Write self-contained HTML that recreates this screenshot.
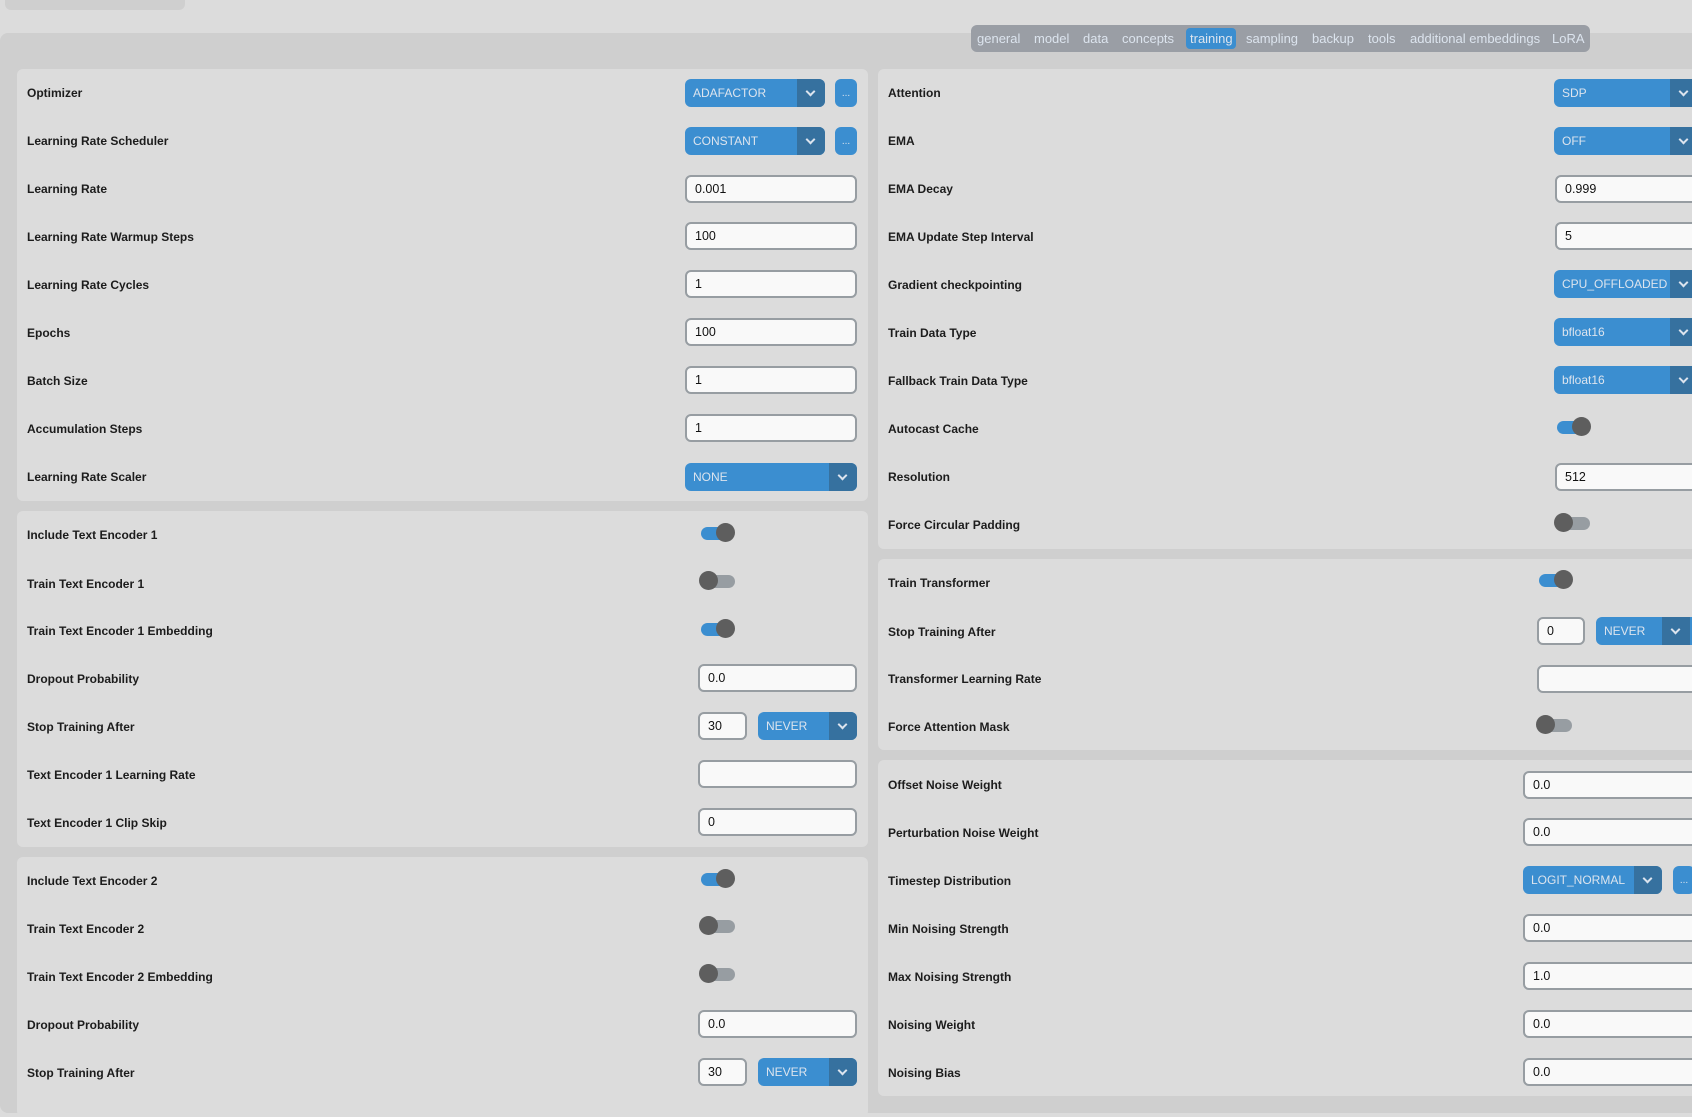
<!DOCTYPE html>
<html><head><meta charset="utf-8"><style>
*{margin:0;padding:0;box-sizing:border-box}
body{width:1692px;height:1105px;background:#dcdcdc;font-family:"Liberation Sans",sans-serif;position:relative;overflow:hidden}
.a{position:absolute}
.stub{left:5px;top:-6px;width:180px;height:16px;background:#cfcfcf;border-radius:6px}
.main{left:0;top:33px;width:1700px;height:1080px;background:#cfcfcf;border-radius:8px}
.tabs{left:971px;top:25px;width:619px;height:27px;background:#9a9ea5;border-radius:6px}
.tab{position:absolute;top:28px;height:21px;line-height:21px;font-size:13px;color:#dce4ee;padding:0 4px;border-radius:4px}
.tab.on{background:#3b8ed0}
.p{position:absolute;background:#dcdcdc;border-radius:6px}
.l{position:absolute;font-size:12px;font-weight:bold;color:#1c1c1c;height:28px;line-height:30px;white-space:nowrap}
.dd{position:absolute;height:28px;background:#3b8ed0;border-radius:6px;color:#dce4ee;font-size:12px;line-height:28px;padding-left:8px;overflow:hidden;white-space:nowrap}
.dd .ar{position:absolute;right:0;top:0;width:28px;height:28px;background:#36719f}
.dd .ar:after{content:"";position:absolute;left:10px;top:9px;width:5px;height:5px;border-right:2px solid #dce4ee;border-bottom:2px solid #dce4ee;transform:rotate(45deg)}
.bt{position:absolute;height:28px;width:22px;background:#3b8ed0;border-radius:6px;color:#dce4ee;font-size:10px;text-align:center;line-height:30px}
.en{position:absolute;height:28px;background:#f9f9f9;border:2px solid #979da2;border-radius:6px;font-size:12.5px;line-height:24px;padding-left:8px;color:#111}
.tg{position:absolute;width:32px;height:13px;border-radius:7px}
.tg i{position:absolute;top:-4px;width:19px;height:19px;border-radius:50%;background:#5e5e5e}
.tg.on{background:#3b8ed0}.tg.on i{right:-2px}
.tg.off{background:#979da2}.tg.off i{left:-4px}
</style></head><body>
<div class="a stub"></div>
<div class="a main"></div>
<div class="a tabs"></div>
<div class="tab" style="left:973px">general</div>
<div class="tab" style="left:1030px">model</div>
<div class="tab" style="left:1079px">data</div>
<div class="tab" style="left:1118px">concepts</div>
<div class="tab on" style="left:1186px;width:50px">training</div>
<div class="tab" style="left:1242px">sampling</div>
<div class="tab" style="left:1308px">backup</div>
<div class="tab" style="left:1364px">tools</div>
<div class="tab" style="left:1406px">additional embeddings</div>
<div class="tab" style="left:1548px">LoRA</div>

<div class="p" style="left:17px;top:69px;width:851px;height:432px"></div>
<div class="p" style="left:17px;top:511px;width:851px;height:336px"></div>
<div class="p" style="left:17px;top:857px;width:851px;height:260px"></div>
<div class="p" style="left:878px;top:69px;width:830px;height:480px"></div>
<div class="p" style="left:878px;top:559px;width:830px;height:191px"></div>
<div class="p" style="left:878px;top:760px;width:830px;height:336px"></div>

<div class="l" style="left:27px;top:78px">Optimizer</div>
<div class="dd" style="left:685px;top:79px;width:140px">ADAFACTOR<span class="ar"></span></div><div class="bt" style="left:835px;top:79px">...</div>
<div class="l" style="left:27px;top:126px">Learning Rate Scheduler</div>
<div class="dd" style="left:685px;top:127px;width:140px">CONSTANT<span class="ar"></span></div><div class="bt" style="left:835px;top:127px">...</div>
<div class="l" style="left:27px;top:174px">Learning Rate</div><div class="en" style="left:685px;top:175px;width:172px">0.001</div>
<div class="l" style="left:27px;top:222px">Learning Rate Warmup Steps</div><div class="en" style="left:685px;top:222px;width:172px">100</div>
<div class="l" style="left:27px;top:270px">Learning Rate Cycles</div><div class="en" style="left:685px;top:270px;width:172px">1</div>
<div class="l" style="left:27px;top:318px">Epochs</div><div class="en" style="left:685px;top:318px;width:172px">100</div>
<div class="l" style="left:27px;top:366px">Batch Size</div><div class="en" style="left:685px;top:366px;width:172px">1</div>
<div class="l" style="left:27px;top:414px">Accumulation Steps</div><div class="en" style="left:685px;top:414px;width:172px">1</div>
<div class="l" style="left:27px;top:462px">Learning Rate Scaler</div>
<div class="dd" style="left:685px;top:463px;width:172px">NONE<span class="ar"></span></div>

<div class="l" style="left:27px;top:520px">Include Text Encoder 1</div><div class="tg on" style="left:701px;top:527px"><i></i></div>
<div class="l" style="left:27px;top:569px">Train Text Encoder 1</div><div class="tg off" style="left:703px;top:575px"><i></i></div>
<div class="l" style="left:27px;top:616px">Train Text Encoder 1 Embedding</div><div class="tg on" style="left:701px;top:623px"><i></i></div>
<div class="l" style="left:27px;top:664px">Dropout Probability</div><div class="en" style="left:698px;top:664px;width:159px">0.0</div>
<div class="l" style="left:27px;top:712px">Stop Training After</div><div class="en" style="left:698px;top:712px;width:49px">30</div>
<div class="dd" style="left:758px;top:712px;width:99px">NEVER<span class="ar"></span></div>
<div class="l" style="left:27px;top:760px">Text Encoder 1 Learning Rate</div><div class="en" style="left:698px;top:760px;width:159px"></div>
<div class="l" style="left:27px;top:808px">Text Encoder 1 Clip Skip</div><div class="en" style="left:698px;top:808px;width:159px">0</div>

<div class="l" style="left:27px;top:866px">Include Text Encoder 2</div><div class="tg on" style="left:701px;top:873px"><i></i></div>
<div class="l" style="left:27px;top:914px">Train Text Encoder 2</div><div class="tg off" style="left:703px;top:920px"><i></i></div>
<div class="l" style="left:27px;top:962px">Train Text Encoder 2 Embedding</div><div class="tg off" style="left:703px;top:968px"><i></i></div>
<div class="l" style="left:27px;top:1010px">Dropout Probability</div><div class="en" style="left:698px;top:1010px;width:159px">0.0</div>
<div class="l" style="left:27px;top:1058px">Stop Training After</div><div class="en" style="left:698px;top:1058px;width:49px">30</div>
<div class="dd" style="left:758px;top:1058px;width:99px">NEVER<span class="ar"></span></div>

<div class="l" style="left:888px;top:78px">Attention</div><div class="dd" style="left:1554px;top:79px;width:160px">SDP<span class="ar" style="right:16px"></span></div>
<div class="l" style="left:888px;top:126px">EMA</div><div class="dd" style="left:1554px;top:127px;width:160px">OFF<span class="ar" style="right:16px"></span></div>
<div class="l" style="left:888px;top:174px">EMA Decay</div><div class="en" style="left:1555px;top:175px;width:160px">0.999</div>
<div class="l" style="left:888px;top:222px">EMA Update Step Interval</div><div class="en" style="left:1555px;top:222px;width:160px">5</div>
<div class="l" style="left:888px;top:270px">Gradient checkpointing</div><div class="dd" style="left:1554px;top:270px;width:160px">CPU_OFFLOADED<span class="ar" style="right:16px"></span></div>
<div class="l" style="left:888px;top:318px">Train Data Type</div><div class="dd" style="left:1554px;top:318px;width:160px">bfloat16<span class="ar" style="right:16px"></span></div>
<div class="l" style="left:888px;top:366px">Fallback Train Data Type</div><div class="dd" style="left:1554px;top:366px;width:160px">bfloat16<span class="ar" style="right:16px"></span></div>
<div class="l" style="left:888px;top:414px">Autocast Cache</div><div class="tg on" style="left:1557px;top:421px"><i></i></div>
<div class="l" style="left:888px;top:462px">Resolution</div><div class="en" style="left:1555px;top:463px;width:160px">512</div>
<div class="l" style="left:888px;top:510px">Force Circular Padding</div><div class="tg off" style="left:1558px;top:517px"><i></i></div>

<div class="l" style="left:888px;top:568px">Train Transformer</div><div class="tg on" style="left:1539px;top:574px"><i></i></div>
<div class="l" style="left:888px;top:617px">Stop Training After</div><div class="en" style="left:1537px;top:617px;width:48px">0</div>
<div class="dd" style="left:1596px;top:617px;width:118px">NEVER<span class="ar" style="right:24px"></span></div>
<div class="l" style="left:888px;top:664px">Transformer Learning Rate</div><div class="en" style="left:1537px;top:665px;width:180px"></div>
<div class="l" style="left:888px;top:712px">Force Attention Mask</div><div class="tg off" style="left:1540px;top:719px"><i></i></div>

<div class="l" style="left:888px;top:770px">Offset Noise Weight</div><div class="en" style="left:1523px;top:771px;width:190px">0.0</div>
<div class="l" style="left:888px;top:818px">Perturbation Noise Weight</div><div class="en" style="left:1523px;top:818px;width:190px">0.0</div>
<div class="l" style="left:888px;top:866px">Timestep Distribution</div><div class="dd" style="left:1523px;top:866px;width:139px">LOGIT_NORMAL<span class="ar"></span></div><div class="bt" style="left:1673px;top:866px">...</div>
<div class="l" style="left:888px;top:914px">Min Noising Strength</div><div class="en" style="left:1523px;top:914px;width:190px">0.0</div>
<div class="l" style="left:888px;top:962px">Max Noising Strength</div><div class="en" style="left:1523px;top:962px;width:190px">1.0</div>
<div class="l" style="left:888px;top:1010px">Noising Weight</div><div class="en" style="left:1523px;top:1010px;width:190px">0.0</div>
<div class="l" style="left:888px;top:1058px">Noising Bias</div><div class="en" style="left:1523px;top:1058px;width:190px">0.0</div>
</body></html>
